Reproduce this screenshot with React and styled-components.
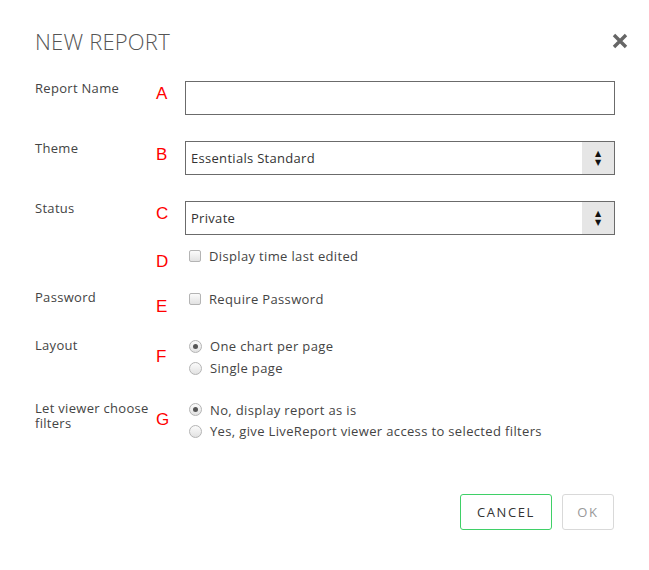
import React from "react";
import styled, { createGlobalStyle } from "styled-components";

const GlobalStyle = createGlobalStyle`
  html, body {
    margin: 0;
    padding: 0;
    background: #fff;
  }
  body {
    font-family: "Open Sans", "Liberation Sans", sans-serif;
    color: #333;
  }
`;

function App() {
  return (
    <>
      <GlobalStyle />
      <Dialog>
        <Header>
          <Title>NEW REPORT</Title>
          <CloseButton type="button" aria-label="Close">
            <svg width="16" height="16" viewBox="0 0 16 16">
              <path
                d="M2 2 L14 14 M14 2 L2 14"
                stroke="#666"
                strokeWidth="3.4"
                strokeLinecap="butt"
              />
            </svg>
          </CloseButton>
        </Header>

        <Body>
          <Row $top={27}>
            <Label>Report Name</Label>
            <Marker $offset={2}>A</Marker>
            <TextInput type="text" />
          </Row>

          <Row $top={26}>
            <Label>Theme</Label>
            <Marker $offset={3}>B</Marker>
            <Select>
              <SelectValue>Essentials Standard</SelectValue>
              <SelectArrows>
                <span>▲</span>
                <span>▼</span>
              </SelectArrows>
            </Select>
          </Row>

          <Row $top={26}>
            <Label>Status</Label>
            <Marker $offset={2}>C</Marker>
            <Select>
              <SelectValue>Private</SelectValue>
              <SelectArrows>
                <span>▲</span>
                <span>▼</span>
              </SelectArrows>
            </Select>
          </Row>

          <Row $top={11}>
            <Label />
            <Marker $offset={5}>D</Marker>
            <Options>
              <Option>
                <CheckBox />
                Display time last edited
              </Option>
            </Options>
          </Row>

          <Row $top={23}>
            <Label $offset={1}>Password</Label>
            <Marker $offset={7}>E</Marker>
            <Options>
              <Option>
                <CheckBox />
                Require Password
              </Option>
            </Options>
          </Row>

          <Row $top={26}>
            <Label $offset={3}>Layout</Label>
            <Marker $offset={11}>F</Marker>
            <Options>
              <Option $h={22}>
                <Radio $checked />
                One chart per page
              </Option>
              <Option $h={22}>
                <Radio />
                Single page
              </Option>
            </Options>
          </Row>

          <Row $top={20}>
            <Label $offset={2}>Let viewer choose filters</Label>
            <Marker $offset={10}>G</Marker>
            <Options>
              <Option $h={21}>
                <Radio $checked />
                No, display report as is
              </Option>
              <Option $h={22}>
                <Radio />
                Yes, give LiveReport viewer access to selected filters
              </Option>
            </Options>
          </Row>
        </Body>

        <Footer>
          <Button $variant="primary">CANCEL</Button>
          <Button $variant="disabled">OK</Button>
        </Footer>
      </Dialog>
    </>
  );
}

const Dialog = styled.div`
  width: 649px;
  height: 570px;
  background: #fff;
  box-sizing: border-box;
`;

const Header = styled.div`
  display: flex;
  align-items: center;
  justify-content: space-between;
  padding: 28px 21px 0 35px;
  height: 26px;
`;

const Title = styled.h1`
  margin: 0;
  font-family: "Open Sans", sans-serif;
  font-weight: 300;
  font-size: 22px;
  line-height: 26px;
  color: #555;
  letter-spacing: 0.2px;
`;

const CloseButton = styled.button`
  border: none;
  background: none;
  padding: 0;
  width: 16px;
  height: 16px;
  display: flex;
  cursor: pointer;
`;

const Body = styled.div`
  padding: 0 35px;
`;

const Row = styled.div`
  display: grid;
  grid-template-columns: 120px 30px 430px;
  align-items: start;
  margin-top: ${(p) => p.$top}px;
`;

const Label = styled.div`
  font-size: 13px;
  line-height: 15px;
  letter-spacing: 0.3px;
  color: #444;
  padding-right: 6px;
  margin-top: ${(p) => p.$offset || 0}px;
`;

const Marker = styled.div`
  height: 0;
  overflow: visible;
  font-family: "Liberation Sans", sans-serif;
  font-size: 17px;
  line-height: 22px;
  color: #ff0000;
  padding-left: 1px;
  margin-top: ${(p) => p.$offset}px;
`;

const TextInput = styled.input`
  box-sizing: border-box;
  width: 430px;
  height: 34px;
  border: 1px solid #6b6b6b;
  border-radius: 0;
  margin: 0;
  padding: 0 5px;
  font: inherit;
  font-size: 13px;
  outline: none;
`;

const Select = styled.div`
  box-sizing: border-box;
  width: 430px;
  height: 34px;
  border: 1px solid #6b6b6b;
  display: flex;
  align-items: stretch;
`;

const SelectValue = styled.div`
  flex: 1;
  display: flex;
  align-items: center;
  padding-left: 5px;
  font-size: 13px;
  letter-spacing: 0.3px;
  color: #333;
`;

const SelectArrows = styled.div`
  width: 32px;
  background: #e6e6e6;
  display: flex;
  flex-direction: column;
  align-items: center;
  justify-content: center;
  font-family: "DejaVu Sans", sans-serif;
  font-size: 8px;
  line-height: 9px;
  color: #111;
`;

const Options = styled.div`
  display: flex;
  flex-direction: column;
  padding-left: 4px;
`;

const Option = styled.label`
  display: flex;
  align-items: center;
  gap: 8px;
  height: ${(p) => p.$h || 20}px;
  font-size: 13px;
  letter-spacing: 0.35px;
  color: #444;
`;

const CheckBox = styled.span`
  box-sizing: border-box;
  width: 12px;
  height: 12px;
  border: 1px solid #b4b4b4;
  border-radius: 2px;
  background: linear-gradient(#fbfbfb, #e2e2e2);
  flex-shrink: 0;
`;

const Radio = styled.span`
  box-sizing: border-box;
  width: 13px;
  height: 13px;
  border: 1px solid #b4b4b4;
  border-radius: 50%;
  background: linear-gradient(#fbfbfb, #e2e2e2);
  flex-shrink: 0;
  display: flex;
  align-items: center;
  justify-content: center;

  &::after {
    content: "";
    width: 5px;
    height: 5px;
    border-radius: 50%;
    background: ${(p) => (p.$checked ? "#555" : "transparent")};
  }
`;

const Footer = styled.div`
  display: flex;
  justify-content: flex-end;
  gap: 10px;
  padding: 0 35px;
  margin-top: 52px;
`;

const Button = styled.button`
  box-sizing: border-box;
  height: 36px;
  min-width: ${(p) => (p.$variant === "primary" ? 92 : 52)}px;
  padding: 0 14px;
  background: #fff;
  border: 1px solid
    ${(p) => (p.$variant === "primary" ? "#3fd067" : "#d9d9d9")};
  border-radius: 3px;
  font-family: "Open Sans", sans-serif;
  font-size: 13px;
  letter-spacing: 1.6px;
  color: ${(p) => (p.$variant === "primary" ? "#333" : "#999")};
  cursor: ${(p) => (p.$variant === "primary" ? "pointer" : "default")};
`;

export default App;
